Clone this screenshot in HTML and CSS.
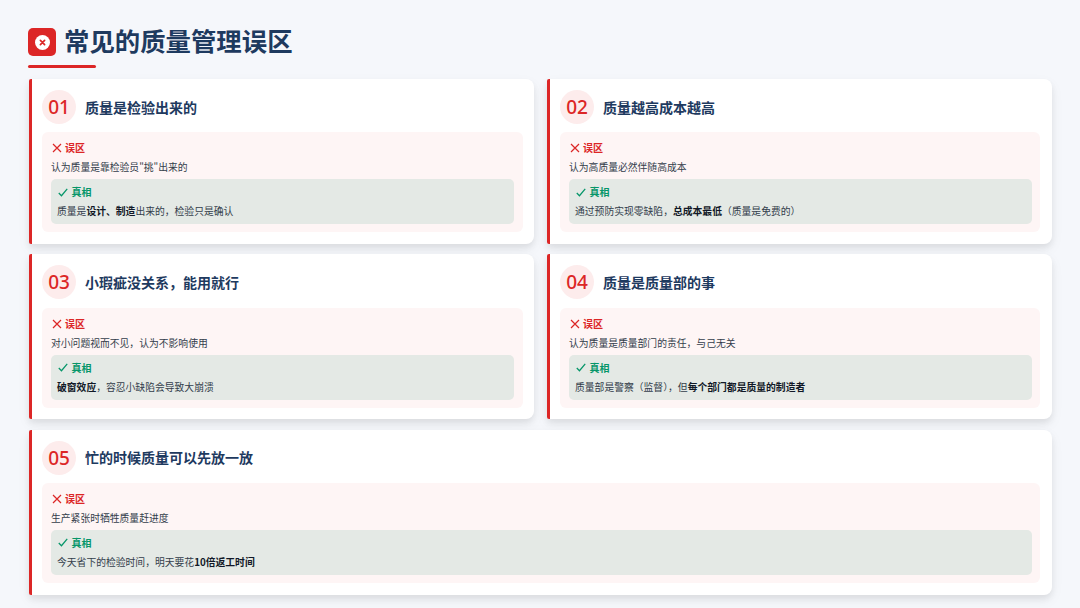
FILE: index.html
```html
<!DOCTYPE html>
<html lang="zh-CN">
<head>
<meta charset="utf-8">
<title>常见的质量管理误区</title>
<link rel="stylesheet" href="styles.css">
</head>
<body>
<main class="slide">
  <header class="head">
    <div class="head-row">
      <span class="logo"><svg width="15" height="15" viewBox="0 0 15 15"><circle cx="7.5" cy="7.5" r="7.5" fill="#fff"/><path d="M5.4 5.4l4.2 4.2M9.6 5.4l-4.2 4.2" stroke="#dc2626" stroke-width="1.7" stroke-linecap="round"/></svg></span>
      <h1>常见的质量管理误区</h1>
    </div>
    <div class="rule"></div>
  </header>
  <section class="grid">
    <article class="card">
      <div class="card-head"><span class="num">01</span><h2>质量是检验出来的</h2></div>
      <div class="myth">
        <div class="label red"><svg class="ico" viewBox="0 0 10 10"><path d="M1 1l8 8M9 1l-8 8"/></svg>误区</div>
        <p>认为质量是靠检验员"挑"出来的</p>
        <div class="truth">
          <div class="label green"><svg class="ico" viewBox="0 0 11 10"><path d="M.8 5.6l3 3L10.2 1"/></svg>真相</div>
          <p>质量是<b>设计、制造</b>出来的，检验只是确认</p>
        </div>
      </div>
    </article>
    <article class="card">
      <div class="card-head"><span class="num">02</span><h2>质量越高成本越高</h2></div>
      <div class="myth">
        <div class="label red"><svg class="ico" viewBox="0 0 10 10"><path d="M1 1l8 8M9 1l-8 8"/></svg>误区</div>
        <p>认为高质量必然伴随高成本</p>
        <div class="truth">
          <div class="label green"><svg class="ico" viewBox="0 0 11 10"><path d="M.8 5.6l3 3L10.2 1"/></svg>真相</div>
          <p>通过预防实现零缺陷，<b>总成本最低</b>（质量是免费的）</p>
        </div>
      </div>
    </article>
    <article class="card row-two">
      <div class="card-head"><span class="num">03</span><h2>小瑕疵没关系，能用就行</h2></div>
      <div class="myth">
        <div class="label red"><svg class="ico" viewBox="0 0 10 10"><path d="M1 1l8 8M9 1l-8 8"/></svg>误区</div>
        <p>对小问题视而不见，认为不影响使用</p>
        <div class="truth">
          <div class="label green"><svg class="ico" viewBox="0 0 11 10"><path d="M.8 5.6l3 3L10.2 1"/></svg>真相</div>
          <p><b>破窗效应</b>，容忍小缺陷会导致大崩溃</p>
        </div>
      </div>
    </article>
    <article class="card row-two">
      <div class="card-head"><span class="num">04</span><h2>质量是质量部的事</h2></div>
      <div class="myth">
        <div class="label red"><svg class="ico" viewBox="0 0 10 10"><path d="M1 1l8 8M9 1l-8 8"/></svg>误区</div>
        <p>认为质量是质量部门的责任，与己无关</p>
        <div class="truth">
          <div class="label green"><svg class="ico" viewBox="0 0 11 10"><path d="M.8 5.6l3 3L10.2 1"/></svg>真相</div>
          <p>质量部是警察（监督），但<b>每个部门都是质量的制造者</b></p>
        </div>
      </div>
    </article>
    <article class="card wide">
      <div class="card-head"><span class="num">05</span><h2>忙的时候质量可以先放一放</h2></div>
      <div class="myth">
        <div class="label red"><svg class="ico" viewBox="0 0 10 10"><path d="M1 1l8 8M9 1l-8 8"/></svg>误区</div>
        <p>生产紧张时牺牲质量赶进度</p>
        <div class="truth">
          <div class="label green"><svg class="ico" viewBox="0 0 11 10"><path d="M.8 5.6l3 3L10.2 1"/></svg>真相</div>
          <p>今天省下的检验时间，明天要花<b>10倍返工时间</b></p>
        </div>
      </div>
    </article>
  </section>
</main>
</body>
</html>
```
FILE: styles.css
```css
* { box-sizing: border-box; margin: 0; padding: 0; }
html, body { width: 1080px; height: 608px; overflow: hidden; }
body {
  background: #f5f7fb;
  font-family: "Noto Sans CJK SC", "Noto Sans", sans-serif;
  color: #374151;
}
.slide { padding: 28px 28px 0 29px; }
.head { margin-left: -1px; }
.head-row { display: flex; align-items: center; gap: 9px; height: 28px; }
.logo {
  width: 28px; height: 28px; border-radius: 5px;
  background: #dc2626;
  display: flex; align-items: center; justify-content: center;
}
.logo svg { display: block; }
h1 { font-size: 25.4px; line-height: 28px; font-weight: 700; color: #1e3a5f; margin-bottom: 4px; margin-left: -1px; }
.rule { width: 68px; height: 3px; background: #dc2626; border-radius: 2px; margin-top: 9px; }
.grid {
  display: grid;
  grid-template-columns: 505px 504.9px;
  grid-auto-rows: 165px;
  column-gap: 13px;
  row-gap: 10.3px;
  margin-top: 11px;
}
.card {
  background: #fff;
  border-left: 3px solid #dc2626;
  border-radius: 2px 8px 8px 2px;
  padding: 11px 11.5px 12px 10px;
  box-shadow: 0 4px 6px rgba(0, 0, 0, 0.07), 0 5px 14px rgba(0, 0, 0, 0.05);
}
.wide { grid-column: 1 / 3; }
.card-head { display: flex; align-items: center; gap: 9px; height: 34px; margin-bottom: 8px; }
.row-two .card-head { margin-bottom: 8.7px; }
.num {
  width: 34px; height: 34px; border-radius: 50%;
  background: #fdecec; color: #dc2626;
  font-family: "Noto Sans", sans-serif;
  font-size: 19px; font-weight: 500;
  display: flex; align-items: center; justify-content: center;
}
h2 { font-size: 14px; line-height: 20px; font-weight: 700; color: #1e3a5f; margin-bottom: 1px; }
.myth {
  background: #fef5f5;
  border-radius: 6px;
  padding: 9px 8.5px 8px 9px;
  height: 100px;
}
.label {
  display: flex; align-items: center; gap: 4px;
  font-size: 10px; line-height: 14px; font-weight: 700;
}
.ico { width: 10px; height: 10px; margin-left: 1px; margin-right: -1px; fill: none; stroke: currentColor; stroke-width: 1.2; display: block; }
.red { color: #dc2626; }
.green { color: #059669; }
p { font-size: 9.8px; line-height: 14px; margin-top: 5px; color: #333d4b; }
p b { font-weight: 700; color: #111827; }
.truth {
  background: #e4e9e5;
  border-radius: 5px;
  margin-top: 5px;
  padding: 6px 8px 5px 6px;
  height: 45px;
}
.truth .ico { width: 10px; height: 9px; margin-left: .5px; margin-right: 0; stroke-width: 1.4; }
.truth p { margin-top: 5px; }
```
